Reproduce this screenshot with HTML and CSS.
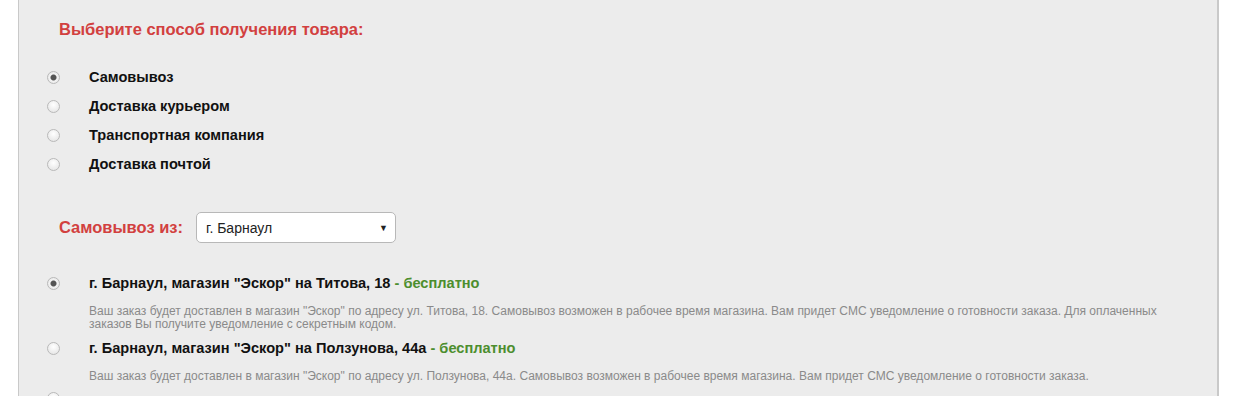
FILE: index.html
```html
<!DOCTYPE html>
<html lang="ru">
<head>
  <meta charset="UTF-8">
  <title>Способ получения</title>
  <link rel="stylesheet" href="styles.css">
</head>
<body>

<div class="panel">
  <h3 class="title">Выберите способ получения товара:</h3>

  <ul class="ways">
    <li><label><input type="radio" name="way" checked><span>Самовывоз</span></label></li>
    <li><label><input type="radio" name="way"><span>Доставка курьером</span></label></li>
    <li><label><input type="radio" name="way"><span>Транспортная компания</span></label></li>
    <li><label><input type="radio" name="way"><span>Доставка почтой</span></label></li>
  </ul>

  <div class="city">
    <span class="city-label">Самовывоз из:</span>
    <div class="select">
      <span>г. Барнаул</span>
      <span class="arrow">▼</span>
    </div>
  </div>

  <ul class="shops">
    <li>
      <label><input type="radio" name="shop" checked><span>г. Барнаул, магазин "Эскор" на Титова, 18 <em>- бесплатно</em></span></label>
      <p>Ваш заказ будет доставлен в магазин "Эскор" по адресу ул. Титова, 18. Самовывоз возможен в рабочее время магазина. Вам придет СМС уведомление о готовности заказа. Для оплаченных заказов Вы получите уведомление с секретным кодом.</p>
    </li>
    <li>
      <label><input type="radio" name="shop"><span>г. Барнаул, магазин "Эскор" на Ползунова, 44а <em>- бесплатно</em></span></label>
      <p>Ваш заказ будет доставлен в магазин "Эскор" по адресу ул. Ползунова, 44а. Самовывоз возможен в рабочее время магазина. Вам придет СМС уведомление о готовности заказа.</p>
    </li>
    <li>
      <label><input type="radio" name="shop"></label>
    </li>
  </ul>
</div>

</body>
</html>
```

FILE: styles.css
```css
body { margin: 0; background: #fff; font-family: "Liberation Sans", Arial, sans-serif; color: #111; }
.panel { margin-left: 18px; width: 1201px; height: 420px; box-sizing: border-box; background: #ececec; border-left: 1px solid #c9c9c9; border-right: 2px solid #c9c9c9; padding: 19px 0 0 40px; overflow: hidden; }
.title { margin: 0; font-size: 16.5px; font-weight: bold; color: #d2403f; line-height: 20px; }

ul { list-style: none; margin: 0; padding: 0; }
label { display: flex; align-items: center; font-size: 14.6px; font-weight: bold; }
label span { margin-left: 29px; }

input[type="radio"] { appearance: none; -webkit-appearance: none; margin: 0 0 0 -12px; width: 13px; height: 13px; border-radius: 50%; border: 1px solid #b9b9b9; background: radial-gradient(circle at 50% 35%, #fff 0, #e7e7e7 80%); box-sizing: border-box; flex: none; }
input[type="radio"]:checked { background: radial-gradient(circle, #555 0, #555 2.5px, #f3f3f3 3.5px, #e2e2e2 100%); }

.ways { margin-top: 30px; }
.ways li { height: 29px; }

.city { display: flex; align-items: center; margin-top: 27px; }
.city-label { font-size: 16.5px; font-weight: bold; color: #d2403f; width: 137px; }
.select { display: flex; justify-content: space-between; align-items: center; width: 200px; height: 31px; box-sizing: border-box; background: #fff; border: 1px solid #b8b8b8; border-radius: 5px; padding: 0 7px 0 9px; font-size: 14px; color: #222; }
.arrow { font-size: 9px; color: #222; }

.shops { margin-top: 32px; }
.shops li { margin-bottom: 9px; }
.shops em { font-style: normal; color: #4c8e2e; }
.shops p { margin: 14px 0 0 30px; font-size: 12px; line-height: 13px; color: #8a8a8a; max-width: 1090px; }
```
